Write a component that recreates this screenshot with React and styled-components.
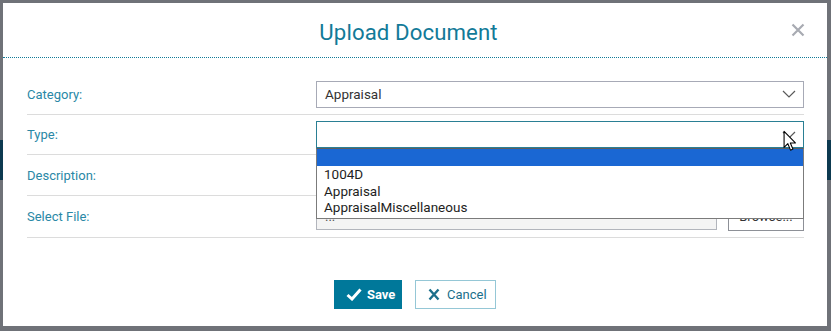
import React from "react";
import styled, { createGlobalStyle } from "styled-components";

const GlobalStyle = createGlobalStyle`
  html, body {
    margin: 0;
    padding: 0;
    height: 100%;
    background: #6f7278;
    font-family: Roboto, "Liberation Sans", Arial, sans-serif;
  }
`;

const colors = {
  teal: "#127a98",
  label: "#2a88a6",
  line: "#dcdcdc",
  text: "#333",
};

const Page = styled.div`
  height: 331px;
  display: flex;
  flex-direction: column;
  padding-top: 140px;
  box-sizing: border-box;
`;

const PageBand = styled.div`
  height: 40px;
  background: #0d3a50;
`;

const Overlay = styled.div`
  position: fixed;
  inset: 0;
  padding: 3px 4px 5px 3px;
  box-sizing: border-box;
  display: flex;
`;

const Modal = styled.div`
  flex: 1;
  background: #fff;
  display: flex;
  flex-direction: column;
`;

const Header = styled.div`
  height: 54px;
  display: flex;
  align-items: center;
  justify-content: center;
  position: relative;
  border-bottom: 1px dotted ${colors.teal};
  padding-right: 13px;
`;

const Title = styled.h2`
  margin: 0;
  padding-top: 4px;
  font-size: 22.2px;
  font-weight: 400;
  color: ${colors.teal};
  letter-spacing: 0.1px;
`;

const Close = styled.button`
  position: absolute;
  right: 22px;
  top: 20px;
  border: 0;
  background: none;
  padding: 0;
  width: 14px;
  height: 14px;
  cursor: pointer;
`;

const Form = styled.div`
  padding: 16px 23px 0 24px;
  display: flex;
  flex-direction: column;
`;

const Row = styled.div`
  display: grid;
  grid-template-columns: 289px 1fr;
  align-items: center;
  padding: 6.5px 0 6px;
  border-bottom: 1px solid ${colors.line};
  position: relative;
  z-index: ${(p) => (p.$raised ? 2 : 1)};
`;

const Label = styled.label`
  font-size: 13px;
  color: ${colors.label};
`;

const Field = styled.div`
  position: relative;
  display: flex;
  align-items: center;
  gap: 11px;
`;

const Select = styled.div`
  flex: 1;
  height: 27px;
  box-sizing: border-box;
  border: 1px solid ${(p) => (p.$focused ? "#2a7f94" : "#a7aab6")};
  display: flex;
  align-items: center;
  justify-content: space-between;
  padding: 0 7px 0 8px;
  font-size: 13.5px;
  color: ${colors.text};
  background: #fff;
`;

const TextBox = styled.div`
  flex: 1;
  height: 27px;
  box-sizing: border-box;
  border: 1px solid #b2b5bc;
  background: ${(p) => (p.$muted ? "#f4f4f4" : "#fff")};
  padding: 5px 8px;
  font-size: 13px;
  color: #555;
`;

const BrowseButton = styled.button`
  width: 76px;
  height: 29px;
  border: 1px solid #8d9097;
  background: #fff;
  font-family: inherit;
  font-size: 13px;
  color: ${colors.text};
`;

const Dropdown = styled.ul`
  position: absolute;
  left: 0;
  right: 0;
  top: 27px;
  margin: 0;
  padding: 0 0 2px;
  list-style: none;
  background: #fff;
  border: 1px solid #7b7b7b;
  border-top-color: #5e5e5e;
  z-index: 5;
`;

const Option = styled.li`
  height: ${(p) => (p.$active ? "17px" : "16.5px")};
  line-height: 16.5px;
  padding: 0 7px;
  font-size: 13.5px;
  color: #1e1e1e;
  background: ${(p) => (p.$active ? "#1a67d3" : "#fff")};
`;

const Cursor = styled.svg`
  position: absolute;
  right: 7px;
  top: 9px;
  z-index: 6;
`;

const Footer = styled.div`
  flex: 1;
  display: flex;
  justify-content: center;
  align-items: flex-start;
  gap: 13px;
  padding-top: 42px;
`;

const Button = styled.button`
  height: 29px;
  display: flex;
  align-items: center;
  gap: ${(p) => (p.$primary ? "5px" : "7px")};
  padding: ${(p) => (p.$primary ? "0 0 0 11px" : "0 0 0 12px")};
  font-family: inherit;
  font-size: 13px;
  font-weight: ${(p) => (p.$primary ? 700 : 400)};
  color: ${(p) => (p.$primary ? "#fff" : "#1b6f8b")};
  background: ${(p) => (p.$primary ? "#00789a" : "#fff")};
  border: 1px solid ${(p) => (p.$primary ? "#00789a" : "#95c7d6")};
  width: ${(p) => (p.$primary ? "68px" : "81px")};
  box-sizing: border-box;
`;

const Chevron = () => (
  <svg width="14" height="8" viewBox="0 0 14 8">
    <path d="M1 1 L7 7 L13 1" fill="none" stroke="#5a5a5a" strokeWidth="1.2" />
  </svg>
);

const options = ["", "1004D", "Appraisal", "AppraisalMiscellaneous"];

export default function App() {
  return (
    <>
      <GlobalStyle />
      <Page>
        <PageBand />
      </Page>
      <Overlay>
        <Modal>
          <Header>
            <Title>Upload Document</Title>
            <Close aria-label="Close">
              <svg width="14" height="14" viewBox="0 0 14 14">
                <path
                  d="M1.5 1.5 L12.5 12.5 M12.5 1.5 L1.5 12.5"
                  stroke="#a8abb2"
                  strokeWidth="2.2"
                />
              </svg>
            </Close>
          </Header>
          <Form>
            <Row>
              <Label>Category:</Label>
              <Field>
                <Select>
                  Appraisal
                  <Chevron />
                </Select>
              </Field>
            </Row>
            <Row $raised>
              <Label>Type:</Label>
              <Field>
                <Select $focused>
                  <span />
                  <Chevron />
                </Select>
                <Cursor width="14" height="22" viewBox="0 0 13 20">
                  <path
                    d="M1 1 L1 16 L4.5 12.5 L7 18.5 L9.2 17.5 L6.8 11.8 L11.5 11.8 Z"
                    fill="#fff"
                    stroke="#000"
                    strokeWidth="1"
                    strokeLinejoin="round"
                  />
                </Cursor>
                <Dropdown>
                  {options.map((o, i) => (
                    <Option key={i} $active={i === 0}>
                      {o}
                    </Option>
                  ))}
                </Dropdown>
              </Field>
            </Row>
            <Row>
              <Label>Description:</Label>
              <Field>
                <TextBox />
              </Field>
            </Row>
            <Row>
              <Label>Select File:</Label>
              <Field>
                <TextBox $muted>...</TextBox>
                <BrowseButton>Browse...</BrowseButton>
              </Field>
            </Row>
          </Form>
          <Footer>
            <Button $primary>
              <svg width="16" height="13" viewBox="0 0 16 13">
                <path
                  d="M1.5 7 L6 11 L14.5 1.5"
                  fill="none"
                  stroke="#fff"
                  strokeWidth="3"
                />
              </svg>
              Save
            </Button>
            <Button>
              <svg width="12" height="13" viewBox="0 0 12 13">
                <path
                  d="M1.5 1.5 L10.5 11.5 M10.5 1.5 L1.5 11.5"
                  stroke="#1b6f8b"
                  strokeWidth="2.4"
                />
              </svg>
              Cancel
            </Button>
          </Footer>
        </Modal>
      </Overlay>
    </>
  );
}
